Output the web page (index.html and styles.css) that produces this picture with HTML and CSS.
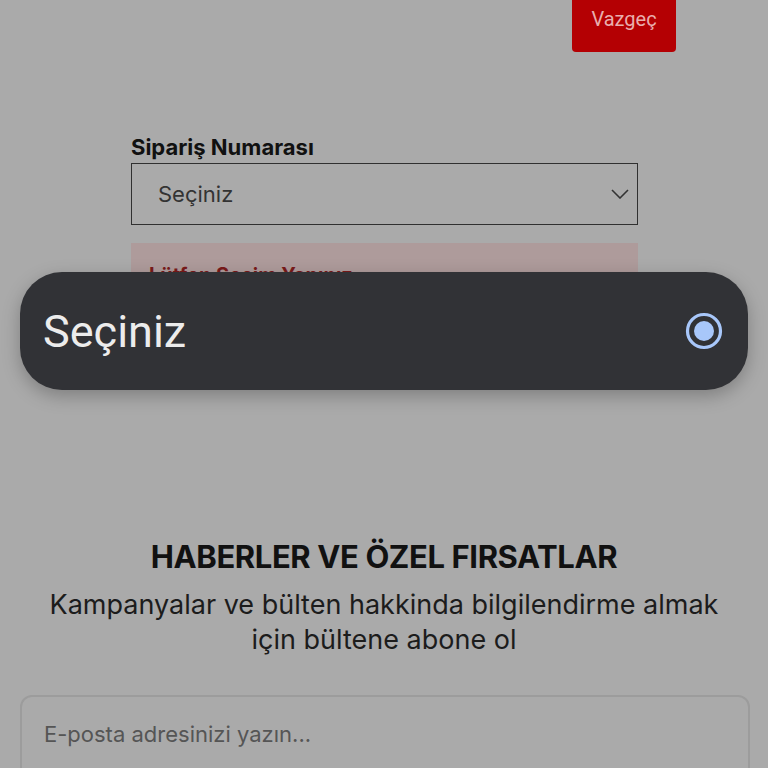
FILE: index.html
```html
<!DOCTYPE html>
<html lang="tr">
<head>
    <meta charset="UTF-8">
    <meta name="viewport" content="width=device-width, initial-scale=1.0">
    <title>Sipariş İade</title>
    <link rel="stylesheet" href="styles.css">
</head>
<body>

    <div class="topbar">
        <button type="button" class="btn-cancel">Vazgeç</button>
    </div>

    <form class="order-form">
        <label class="form__label" for="order">Sipariş Numarası</label>
        <div class="select-box">
            <span>Seçiniz</span>
            <svg width="18" height="10" viewBox="0 0 18 10"><path d="M1 1l8 8 8-8" fill="none" stroke="#333" stroke-width="1.6"/></svg>
        </div>
        <div class="alert">Lütfen Seçim Yapınız</div>
    </form>

    <section class="newsletter">
        <h2>HABERLER VE ÖZEL FIRSATLAR</h2>
        <p>Kampanyalar ve bülten hakkinda bilgilendirme almak<br>için bültene abone ol</p>
        <div class="mail-box">E-posta adresinizi yazın...</div>
    </section>

    <!-- native picker popup -->
    <div class="picker">
        <span>Seçiniz</span>
        <svg width="40" height="40" viewBox="0 0 40 40">
            <circle cx="20" cy="20" r="16.5" fill="none" stroke="#a8c7fa" stroke-width="3.2"/>
            <circle cx="20" cy="20" r="10" fill="#a8c7fa"/>
        </svg>
    </div>

</body>
</html>
```

FILE: styles.css
```css
html, body {
    height: 768px;
    overflow: hidden;
}
body {
    margin: 0;
    background: #aaaaaa;
    font-family: "Inter", "Open Sans", sans-serif;
    color: #111;
    position: relative;
}

.topbar {
    display: flex;
    padding-left: 572px;
}
.btn-cancel {
    margin-top: -14px;
    width: 104px;
    height: 66px;
    padding: 0;
    border: none;
    border-radius: 4px;
    background: #b40003;
    color: #e9aeae;
    font: 400 20px "Roboto", sans-serif;
}

.order-form {
    width: 507px;
    margin: 83px 0 0 131px;
    display: flex;
    flex-direction: column;
}
.form__label {
    font-weight: 700;
    font-size: 22px;
    line-height: 25px;
    margin-bottom: 3px;
}
.select-box {
    height: 60px;
    border: 1.5px solid #303030;
    display: flex;
    align-items: center;
    justify-content: space-between;
    padding: 0 8px 0 26px;
    font-size: 22px;
    color: #333;
}
.alert {
    margin-top: 18px;
    height: 60px;
    background: #ae9b9b;
    padding: 20px 18px 0;
    color: #7a1a1a;
    font-weight: 700;
    font-size: 20px;
}

.newsletter {
    margin-top: 216px;
    text-align: center;
}
.newsletter h2 {
    margin: 0;
    font-size: 31px;
    line-height: 36px;
    font-weight: 700;
    letter-spacing: -0.4px;
}
.newsletter p {
    margin: 12px 0 0;
    font-size: 27px;
    line-height: 35px;
    color: #1c1c1c;
}
.mail-box {
    margin: 38px 18px 0 20px;
    height: 80px;
    border: 2px solid #9c9c9c;
    border-radius: 12px;
    text-align: left;
    padding: 24px 0 0 22px;
    font-size: 22px;
    color: #555;
}

.picker {
    position: absolute;
    left: 20px;
    top: 272px;
    width: 728px;
    height: 118px;
    box-sizing: border-box;
    padding: 0 24px 0 23px;
    border-radius: 42px;
    background: #313236;
    box-shadow: 0 6px 18px rgba(0, 0, 0, 0.25);
    display: flex;
    align-items: center;
    justify-content: space-between;
    font: 400 45px "Roboto", sans-serif;
    color: #ececec;
}
```
